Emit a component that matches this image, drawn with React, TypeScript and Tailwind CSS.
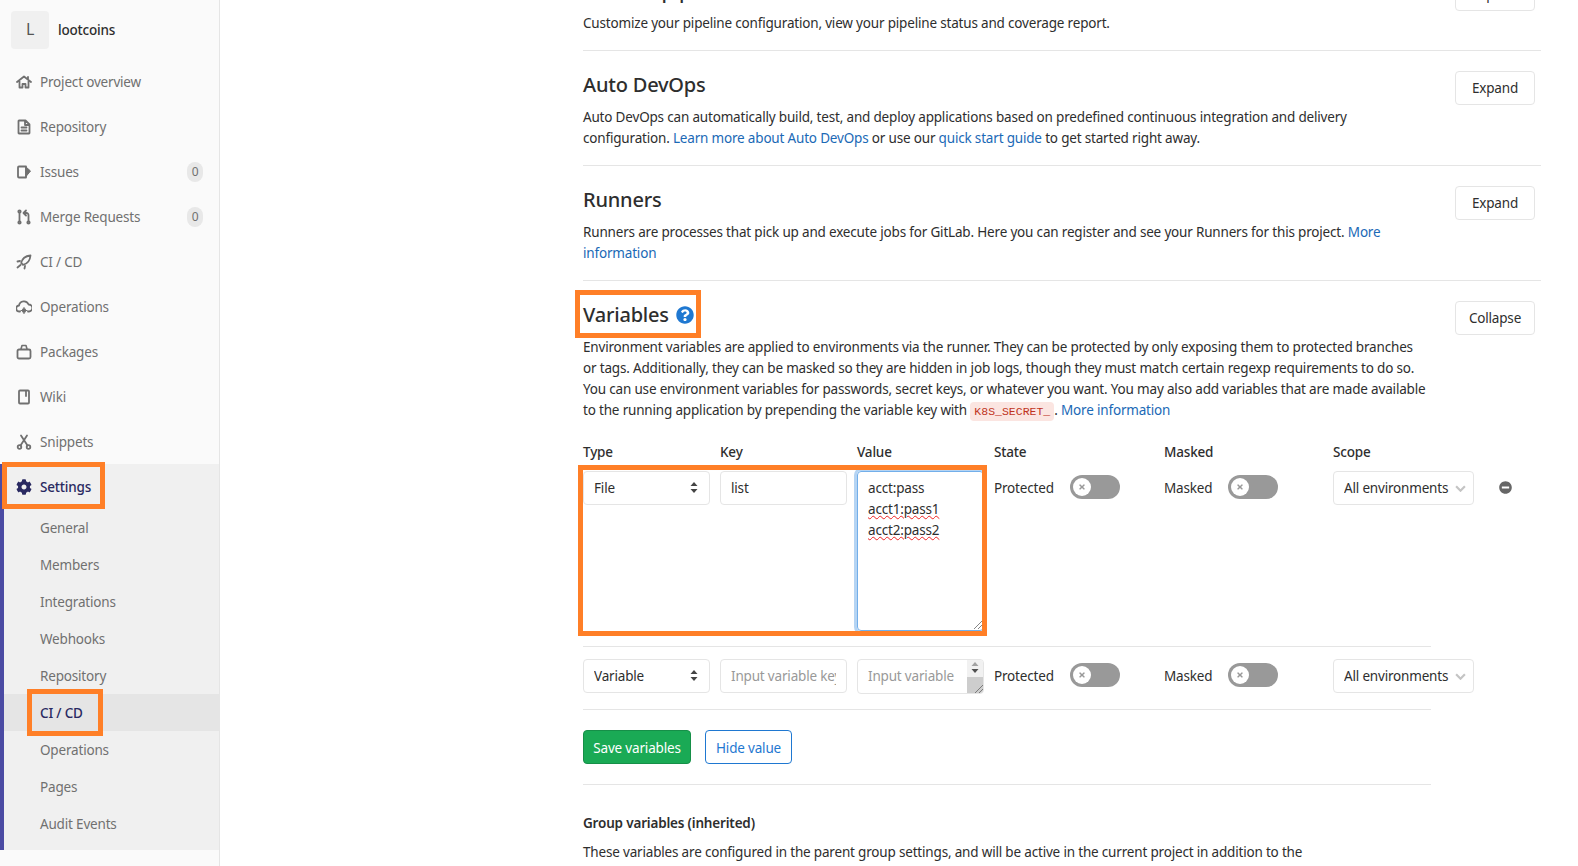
import { ReactNode } from 'react';
import { FaCog, FaMinusCircle, FaQuestionCircle, FaTimes } from 'react-icons/fa';

const Svg = ({ children }: { children: ReactNode }) => (
  <svg viewBox="0 0 16 16" className="w-4 h-4 shrink-0" fill="none" stroke="currentColor" strokeWidth="1.8" strokeLinecap="round" strokeLinejoin="round">
    {children}
  </svg>
);

const icons: Record<string, ReactNode> = {
  home: <Svg><path d="M1 8l7-5.5L15 8M3.5 7v6.5h3V10h3v3.5h3V7M12 3v2.5" /></Svg>,
  doc: <Svg><path d="M3 1.5h6.5l4 4V14a.5.5 0 0 1-.5.5H3a.5.5 0 0 1-.5-.5V2a.5.5 0 0 1 .5-.5zM9 2v4h4M5.5 8.5h5M5.5 11.5h5" /></Svg>,
  issues: <Svg><path d="M10 2.5H3a1 1 0 0 0-1 1v9a1 1 0 0 0 1 1h7z" /><path d="M10 3l4.5 4-4.5 5.5z" fill="currentColor" strokeWidth="1" /></Svg>,
  merge: <Svg><path d="M3.5 3.5v9M12.5 12.5V6a2 2 0 0 0-2-2H8M10 1.5L7.5 4 10 6.5" /><circle cx="3.5" cy="2.5" r="1.2" /><circle cx="3.5" cy="13.5" r="1.2" /><circle cx="12.5" cy="13.5" r="1.2" /></Svg>,
  rocket: <Svg><path d="M14.5 1.5C9.5 2 6 5 5.2 9l1.8 1.8c4-.8 7-4.2 7.5-9.3z" /><path d="M1.5 7.5l2.5-.5M8.5 14.5l.5-2.5M1.5 13.5l3-2.5" /></Svg>,
  ops: <Svg><path d="M4 12.5h-.5a3 3 0 0 1-.5-6 5 5 0 0 1 9.6-1 3.5 3.5 0 0 1 .4 7H12" /><circle cx="8" cy="11.5" r="2.2" fill="currentColor" stroke="none" /><path d="M8 8.5v6M5 11.5h6" strokeWidth="1.2" /></Svg>,
  bag: <Svg><rect x="1.5" y="5.5" width="13" height="9" rx="1.5" /><path d="M5 5l1-3.5h4L11 5" strokeWidth="1.6" /></Svg>,
  book: <Svg><rect x="3" y="1.5" width="10" height="13" rx="1" /><path d="M10 2v5" /></Svg>,
  scissors: <Svg><circle cx="3.5" cy="13" r="1.8" /><circle cx="12.5" cy="13" r="1.8" /><path d="M4.5 11.5L11 1.5M11.5 11.5L5 1.5" /></Svg>,
};

const topNav = [
  { icon: 'home', label: 'Project overview' },
  { icon: 'doc', label: 'Repository' },
  { icon: 'issues', label: 'Issues', badge: '0' },
  { icon: 'merge', label: 'Merge Requests', badge: '0' },
  { icon: 'rocket', label: 'CI / CD' },
  { icon: 'ops', label: 'Operations' },
  { icon: 'bag', label: 'Packages' },
  { icon: 'book', label: 'Wiki' },
  { icon: 'scissors', label: 'Snippets' },
];

const subNav = ['General', 'Members', 'Integrations', 'Webhooks', 'Repository', 'CI / CD', 'Operations', 'Pages', 'Audit Events'];

const Sidebar = () => (
  <aside className="w-[220px] h-full shrink-0 bg-[#fafafa] border-r border-[#e5e5e5]">
    <div className="h-[59px] flex items-center pl-[11px] gap-[9px]">
      <div className="w-[38px] h-[38px] rounded-[4px] bg-[#f0f0f0] flex items-center justify-center text-[#555] text-[16px]">L</div>
      <span className="pt-[2px] font-medium text-[#2e2e2e]">lootcoins</span>
    </div>
    {topNav.map((item) => (
      <div key={item.label} className="h-[45px] flex items-center pl-4 pr-4 gap-2 text-[#707070]">
        {icons[item.icon]}
        <span className="flex-1 pt-[2px]">{item.label}</span>
        {item.badge && (
          <span className="w-4 h-5 rounded-full bg-[#e8e8e8] text-[12px] flex items-center justify-center">{item.badge}</span>
        )}
      </div>
    ))}
    <div className="bg-[#f0f0f0] border-l-4 border-[#4b4ba3] pb-2">
      <div className="relative h-[45px] flex items-center pl-3 gap-2 text-[#292961] font-medium">
        <FaCog className="w-4 h-4 shrink-0 text-[#292961]" />
        <span className="pt-[2px]">Settings</span>
        <div className="absolute left-[-2px] top-[-2px] w-[103px] h-[47px] border-[5px] border-[#ff7f27] pointer-events-none" />
      </div>
      {subNav.map((label) => {
        const active = label === 'CI / CD';
        return (
          <div key={label} className={`relative h-[37px] flex items-center pl-[36px] pt-[2px] ${active ? 'bg-[#e5e5e5] text-[#292961] font-medium' : 'text-[#707070]'}`}>
            {label}
            {active && <div className="absolute left-[23px] top-[-5px] w-[76px] h-[47px] border-[5px] border-[#ff7f27] pointer-events-none" />}
          </div>
        );
      })}
    </div>
  </aside>
);

const Link = ({ children }: { children: ReactNode }) => <a className="text-[#1b69b6]">{children}</a>;

const Section = ({ title, button, children }: { title: ReactNode; button: string; children: ReactNode }) => (
  <section className="relative pt-5 pb-4 border-b border-[#e5e5e5]">
    <button className="absolute right-[6px] top-5 w-20 h-[34px] border border-[#e5e5e5] rounded-[4px] bg-white">{button}</button>
    <h4 className="text-[20px] leading-[28px] font-medium tracking-[-0.2px] mb-2">{title}</h4>
    <div className="max-w-[838px]">{children}</div>
  </section>
);

const SelectBox = ({ value, w = 'w-[127px]', chevron }: { value: string; w?: string; chevron?: boolean }) => (
  <div className={`relative h-[34px] ${w}`}>
    <select defaultValue={value} className="appearance-none w-full h-full border border-[#e5e5e5] rounded-[4px] pl-[10px] bg-white text-[#2e2e2e]">
      <option>{value}</option>
    </select>
    {chevron ? (
      <svg viewBox="0 0 10 6" className="absolute right-[8px] top-[14px] w-[11px] h-[7px] text-[#c4c4c4]" fill="none" stroke="currentColor" strokeWidth="2">
        <path d="M1 1l4 4 4-4" />
      </svg>
    ) : (
      <svg viewBox="0 0 8 11" className="absolute right-[12px] top-[11px] w-2 h-[11px] text-[#444]" fill="currentColor">
        <path d="M4 0l3.5 4h-7zM4 11L.5 7h7z" />
      </svg>
    )}
  </div>
);

const Toggle = () => (
  <div className="relative w-[50px] h-[24px] rounded-full bg-[#999] mt-[4px]">
    <div className="absolute left-[3px] top-[3px] w-[18px] h-[18px] rounded-full bg-white flex items-center justify-center">
      <FaTimes className="w-2 h-2 text-[#999]" />
    </div>
  </div>
);

const Resizer = () => (
  <svg viewBox="0 0 9 9" className="absolute right-[1px] bottom-[1px] w-[9px] h-[9px] text-[#666]" fill="none" stroke="currentColor" strokeWidth="0.8">
    <path d="M1 9l8-8M5 9l4-4" />
  </svg>
);

const gridCols = 'grid grid-cols-[127px_127px_127px_160px_159px_141px_auto] gap-x-[10px] items-start';

const StateCells = () => (
  <>
    <div className="flex justify-between w-[126px]">
      <span className="mt-[7px]">Protected</span>
      <Toggle />
    </div>
    <div className="flex gap-[13px]">
      <span className="mt-[7px] w-[51px]">Masked</span>
      <Toggle />
    </div>
    <SelectBox value="All environments" w="w-[141px]" chevron />
  </>
);

const Spell = ({ children }: { children: ReactNode }) => (
  <span className="underline decoration-wavy decoration-[#e22] decoration-1 underline-offset-1">{children}</span>
);

const Variables = () => (
  <div className="w-[848px]">
    <div className={`${gridCols} mt-5 mb-2 font-medium`}>
      {['Type', 'Key', 'Value', 'State', 'Masked', 'Scope'].map((h) => (
        <span key={h}>{h}</span>
      ))}
    </div>

    <div className={`${gridCols} relative pb-[15px] border-b border-[#e5e5e5]`}>
      <SelectBox value="File" />
      <input defaultValue="list" className="w-full h-[34px] border border-[#e5e5e5] rounded-[4px] px-[10px]" />
      <div className="relative h-[160px] border border-[#73afea] rounded-[4px] px-[10px] pt-[6px] shadow-[0_0_0_3px_#b5d4f3]">
        <div>acct:pass</div>
        <div><Spell>acct1:pass1</Spell></div>
        <div><Spell>acct2:pass2</Spell></div>
        <Resizer />
      </div>
      <StateCells />
      <FaMinusCircle className="w-[13px] h-[13px] text-[#666] mt-[10px] ml-[15px]" />
      <div className="absolute left-[-5px] top-[-6px] w-[409px] h-[171px] border-[5px] border-[#ff7f27] pointer-events-none" />
    </div>

    <div className={`${gridCols} pt-3 pb-[15px] border-b border-[#e5e5e5]`}>
      <SelectBox value="Variable" />
      <input placeholder="Input variable key" className="w-full h-[34px] border border-[#e5e5e5] rounded-[4px] px-[10px] placeholder:text-[#999]" />
      <div className="relative h-[35px]">
        <textarea placeholder="Input variable" className="block w-full h-full resize-none overflow-hidden border border-[#e5e5e5] rounded-[4px] pl-[10px] pr-5 pt-[6px] placeholder:text-[#999]" />
        <div className="absolute right-[1px] top-[1px] bottom-[1px] w-4 bg-[#f1f1f1] rounded-r-[3px] overflow-hidden flex flex-col">
          <svg viewBox="0 0 8 14" className="w-2 h-[14px] mx-auto mt-[2px]">
            <path d="M4 0l3.5 4h-7z" fill="#a3a3a3" />
            <path d="M4 11L.5 7h7z" fill="#505050" />
          </svg>
          <div className="flex-1 bg-[#cdcdcd] mt-[1px]" />
        </div>
        <Resizer />
      </div>
      <StateCells />
    </div>

    <div className="flex gap-[14px] py-5 border-b border-[#e5e5e5]">
      <button className="w-[108px] h-[34px] pt-[2px] rounded-[4px] bg-[#1aaa55] border border-[#168f48] text-white">Save variables</button>
      <button className="w-[87px] h-[34px] pt-[2px] rounded-[4px] bg-white border border-[#1f78d1] text-[#1f78d1]">Hide value</button>
    </div>

    <p className="mt-7 mb-2 font-semibold">Group variables (inherited)</p>
    <p>These variables are configured in the parent group settings, and will be active in the current project in addition to the</p>
  </div>
);

export default function App() {
  return (
    <div className="flex w-[1578px] h-[866px] overflow-hidden bg-white text-[#2e2e2e] text-[13.5px] leading-[21px] font-['Noto_Sans',sans-serif] tracking-[-0.18px]">
      <Sidebar />
      <main className="flex-1 min-w-0 pl-[363px] pr-[37px] overflow-hidden">
        <div className="-mt-[43px]">
          <Section title="General pipelines" button="Expand">
            Customize your pipeline configuration, view your pipeline status and coverage report.
          </Section>
          <Section title="Auto DevOps" button="Expand">
            Auto DevOps can automatically build, test, and deploy applications based on predefined continuous integration and delivery configuration. <Link>Learn more about Auto DevOps</Link> or use our <Link>quick start guide</Link> to get started right away.
          </Section>
          <Section title="Runners" button="Expand">
            Runners are processes that pick up and execute jobs for GitLab. Here you can register and see your Runners for this project. <Link>More information</Link>
          </Section>
          <section className="relative pt-5">
            <button className="absolute right-[6px] top-5 w-20 h-[34px] border border-[#e5e5e5] rounded-[4px] bg-white">Collapse</button>
            <div className="relative w-fit flex items-center gap-[7px] mb-2">
              <h4 className="text-[20px] leading-[28px] font-medium tracking-[-0.2px]">Variables</h4>
              <FaQuestionCircle className="w-[18px] h-[18px] text-[#1f78d1]" />
              <div className="absolute left-[-8px] top-[-11px] w-[126px] h-[48px] border-[5px] border-[#ff7f27] pointer-events-none" />
            </div>
            <div className="max-w-[844px]">
              Environment variables are applied to environments via the runner. They can be protected by only exposing them to protected branches or tags. Additionally, they can be masked so they are hidden in job logs, though they must match certain regexp requirements to do so. You can use environment variables for passwords, secret keys, or whatever you want. You may also add variables that are made available to the running application by prepending the variable key with{' '}
              <code className="px-1 py-[3px] rounded-[4px] bg-[#fbe5e1] text-[#c0341d] text-[11.5px] font-['Liberation_Mono',monospace] tracking-normal">K8S_SECRET_</code>. <Link>More information</Link>
            </div>
            <Variables />
          </section>
        </div>
      </main>
    </div>
  );
}
